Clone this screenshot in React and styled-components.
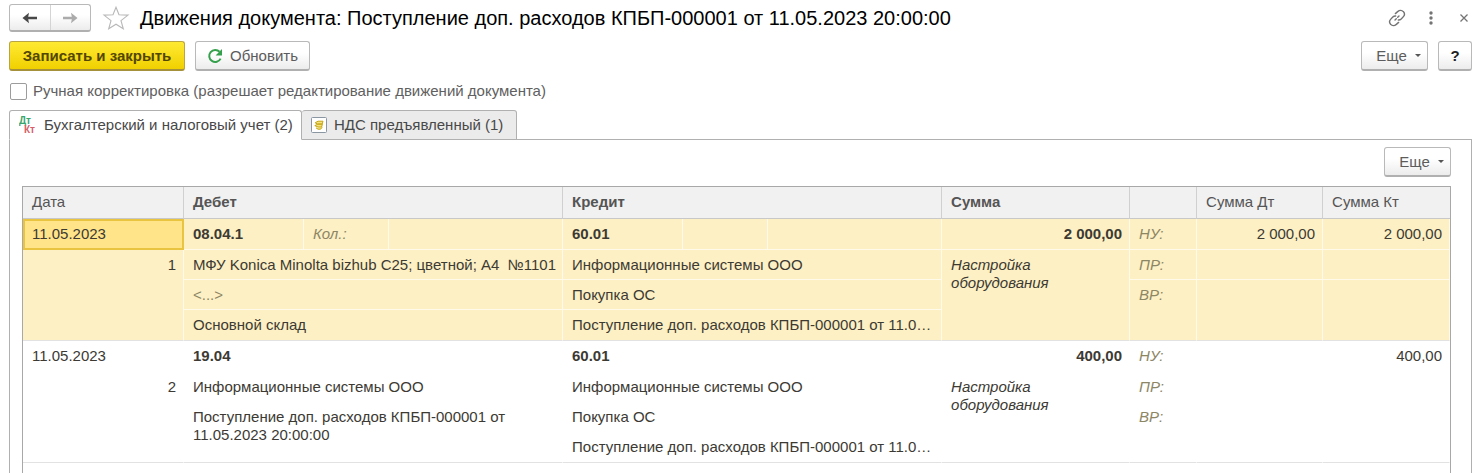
import React from "react";
import styled, { createGlobalStyle, css } from "styled-components";

const GlobalStyle = createGlobalStyle`
  * {
    box-sizing: border-box;
  }
  body {
    margin: 0;
    background: #fff;
    color: #404040;
    font-family: "Liberation Sans", Arial, sans-serif;
    font-size: 15px;
    line-height: 18px;
  }
`;

const Page = styled.div`
  display: flex;
  flex-direction: column;
  min-height: 100vh;
  padding: 4px 8px 0 9px;
`;

const Header = styled.header`
  display: flex;
  align-items: center;
  height: 28px;
`;

const raised = css`
  border: 1px solid #b9b9b9;
  border-bottom: 2px solid #b0b0b0;
  border-radius: 3px;
  background: linear-gradient(#fff 40%, #ececec);
`;

const NavGroup = styled.div`
  ${raised}
  display: flex;
  width: 82px;
  height: 28px;
`;

const NavButton = styled.button`
  display: flex;
  flex: 1;
  align-items: center;
  justify-content: center;
  padding: 0;
  border: 0;
  background: none;
  color: ${(props) => (props.$muted ? "#ababab" : "#484848")};
  cursor: pointer;

  & + & {
    border-left: 1px solid #d4d4d4;
  }
`;

const IconButton = styled.button`
  display: flex;
  align-items: center;
  justify-content: center;
  width: ${(props) => props.$width}px;
  height: 28px;
  padding: 0;
  border: 0;
  background: none;
  color: #747474;
  cursor: pointer;
`;

const StarButton = styled(IconButton)`
  margin: 0 10px 0 11px;
`;

const WindowActions = styled.div`
  display: flex;
  gap: 21px;
`;

const Title = styled.h1`
  flex: 1;
  margin: 0;
  color: #000;
  font-size: 20px;
  font-weight: 400;
  line-height: 26px;
  white-space: nowrap;
`;

const Toolbar = styled.div`
  display: flex;
  gap: 10px;
  margin-top: 9px;
`;

const Spacer = styled.div`
  flex: 1;
`;

const Button = styled.button`
  ${raised}
  display: flex;
  align-items: center;
  justify-content: center;
  gap: 7px;
  height: 30px;
  width: ${(props) => props.$width}px;
  padding: 0;
  color: #5c5c5c;
  font: inherit;
  cursor: pointer;
`;

const PrimaryButton = styled(Button)`
  border-color: #b9a544;
  border-bottom-color: #a5913a;
  background: linear-gradient(#ffea33, #f0d000);
  color: #534600;
  font-weight: 700;
`;

const MenuButton = styled(Button)`
  gap: 8px;
  padding-left: 8px;
`;

const HelpButton = styled(Button)`
  color: #222;
  font-weight: 700;
`;

const Caret = styled.span`
  border: 3px solid transparent;
  border-top-color: #555;
  border-bottom: 0;
`;

const CheckLabel = styled.label`
  display: flex;
  align-items: center;
  gap: 6px;
  height: 18px;
  margin: 11px 0 10px 1px;
  color: #606060;
`;

const Checkbox = styled.input`
  appearance: none;
  width: 17px;
  height: 17px;
  margin: 0;
  border: 1px solid #9c9c9c;
  border-radius: 2px;
  background: #fff;

  &:checked {
    background: #f2d516;
  }
`;

const Tabs = styled.div`
  display: flex;
`;

const Tab = styled.button`
  display: flex;
  align-items: center;
  gap: 7px;
  height: 30px;
  width: ${(props) => props.$width}px;
  padding: 0 0 0 9px;
  border: 1px solid #b0b0b0;
  border-bottom-color: ${(props) => (props.$active ? "#fff" : "#b0b0b0")};
  border-radius: 3px 3px 0 0;
  background: ${(props) => (props.$active ? "#fff" : "#ebebeb")};
  color: #484848;
  font: inherit;
  white-space: nowrap;
  cursor: pointer;

  & + & {
    border-left: 0;
  }
`;

const TabsLine = styled.div`
  flex: 1;
  border-bottom: 1px solid #b0b0b0;
`;

const Panel = styled.section`
  display: flex;
  flex: 1;
  flex-direction: column;
  padding: 7px 20px 0 12px;
  border: solid #b0b0b0;
  border-width: 0 1px;
`;

const PanelBar = styled.div`
  display: flex;
  justify-content: flex-end;
  margin-bottom: 9px;
`;

const TableFrame = styled.div`
  flex: 1;
  border: 1px solid #a8a8a8;
  border-bottom: 0;
`;

const Table = styled.table`
  width: 100%;
  table-layout: fixed;
  border-collapse: separate;
  border-spacing: 0;
`;

const Th = styled.th`
  height: 32px;
  padding: 0 9px 2px;
  border-right: 1px solid #d0d0d0;
  border-bottom: 1px solid #c8c8c8;
  background: #f1f1f1;
  color: #555;
  font-weight: ${(props) => (props.$bold ? 700 : 400)};
  text-align: left;

  &:last-child {
    border-right: 0;
  }
`;

const Row = styled.tr`
  height: ${(props) => props.$height || 30}px;
  background: ${(props) => (props.$selected ? "#fdf0c4" : "#fff")};
  --line: ${(props) => (props.$selected ? "#fffae9" : "#fff")};
`;

const Td = styled.td`
  padding: 6px ${(props) => (props.$right ? 7 : 4)}px 0 9px;
  border-right: 1px solid var(--line);
  border-bottom: 1px solid ${(props) => (props.$last ? "#e2e2e2" : "var(--line)")};
  font-weight: ${(props) => (props.$bold ? 700 : 400)};
  font-style: ${(props) => (props.$italic ? "italic" : "normal")};
  text-align: ${(props) => (props.$right ? "right" : "left")};
  vertical-align: top;
  color: ${(props) => (props.$muted ? "#8d8665" : "#3c3a33")};
`;

const ActiveTd = styled(Td)`
  padding: 4px 7px 0;
  border: 2px solid #e9c440;
  background: #ffe48a;
`;

const Line = styled.div`
  white-space: pre;
`;

const LinkIcon = () => (
  <svg width="18" height="18" viewBox="0 0 18 18" fill="none" stroke="currentColor" strokeWidth="1.4" strokeLinecap="round">
    <path d="M7.4 4.6 9.9 2.4a3.7 3.7 0 0 1 5.4.2 3.7 3.7 0 0 1 .1 5L13.2 10a3.7 3.7 0 0 1-2.9 1" />
    <path d="M10.6 13.4 8.1 15.6a3.7 3.7 0 0 1-5.4-.2 3.7 3.7 0 0 1-.1-5L4.8 8a3.7 3.7 0 0 1 2.9-1" />
    <path d="M7 11l1.3-1.3M9.7 8.3 11 7" />
  </svg>
);

const ArrowIcon = ({ flip }) => (
  <svg width="16" height="12" viewBox="0 0 16 12" fill="currentColor">
    <path d={flip ? "M15.5 6 9 .8l.8 3.9H1v2.6h8.8L9 11.2z" : "M.5 6 7 .8l-.8 3.9H15v2.6H6.2l.8 3.9z"} />
  </svg>
);

const StarIcon = () => (
  <svg width="28" height="26" viewBox="0 0 28 26" fill="none" stroke="#b8b8b8" strokeWidth="1.1">
    <path d="M14 2.2 17 9.8l9 .3-7 5.5 2.3 8.2-7.3-4.6-7.3 4.6L9 15.6 2 10.1l9-.3z" />
  </svg>
);

const RefreshIcon = () => (
  <svg width="16" height="16" viewBox="0 0 16 16">
    <path d="M12.6 3.8A6 6 0 1 0 13.6 10.6" fill="none" stroke="#35a04c" strokeWidth="2" />
    <path d="M15 1v6.6H8.6z" fill="#35a04c" />
  </svg>
);

const AccountIcon = () => (
  <svg width="18" height="18" viewBox="0 0 18 18" fontSize="10" fontWeight="700">
    <text x="0" y="8" fill="#38a56c">Дт</text>
    <text x="5" y="17" fill="#d5606a">Кт</text>
  </svg>
);

const VatIcon = () => (
  <svg width="16" height="16" viewBox="0 0 16 16" fill="none">
    <rect x=".5" y=".5" width="15" height="15" rx="1" fill="#fff" stroke="#8a97a3" />
    <path d="M4.2 5.8 7 4.2h5L11.2 7H6.4zM3.8 8.6l3-1.4h4.6L10.6 10H7zM5 10.8l2 1.4h2.6l1.6-2" fill="#f5e27c" stroke="#c4a512" />
  </svg>
);

const columns = [161, 120, 85, 174, 120, 85, 174, 188, 67, 126, 127];

const entries = [
  {
    number: 1,
    date: "11.05.2023",
    selected: true,
    debit: "08.04.1",
    quantity: "Кол.:",
    debitLines: ["МФУ Konica Minolta bizhub C25; цветной; А4  №1101", "<...>", "Основной склад"],
    sum: "2 000,00",
    sumDt: "2 000,00",
    sumKt: "2 000,00",
  },
  {
    number: 2,
    date: "11.05.2023",
    debit: "19.04",
    debitLines: ["Информационные системы ООО", "Поступление доп. расходов КПБП-000001 от 11.05.2023 20:00:00"],
    sum: "400,00",
    sumKt: "400,00",
  },
];

const Entry = ({ entry }) => {
  const { selected, debitLines } = entry;
  const DateCell = selected ? ActiveTd : Td;
  const wide = debitLines.length === 2;

  return (
    <tbody>
      <Row $selected={selected} $height={31}>
        <DateCell>{entry.date}</DateCell>
        <Td $bold>{entry.debit}</Td>
        <Td $italic $muted>{entry.quantity}</Td>
        <Td />
        <Td $bold>60.01</Td>
        <Td />
        <Td />
        <Td $bold $right>{entry.sum}</Td>
        <Td $italic $muted>НУ:</Td>
        <Td $right>{entry.sumDt}</Td>
        <Td $right>{entry.sumKt}</Td>
      </Row>
      <Row $selected={selected}>
        <Td $right rowSpan={3} $last>{entry.number}</Td>
        <Td colSpan={3}><Line>{debitLines[0]}</Line></Td>
        <Td colSpan={3}>Информационные системы ООО</Td>
        <Td $italic rowSpan={3} $last>Настройка оборудования</Td>
        <Td $italic $muted>ПР:</Td>
        <Td />
        <Td />
      </Row>
      <Row $selected={selected}>
        <Td colSpan={3} rowSpan={wide ? 2 : 1} $last={wide} $muted={!wide}>{debitLines[1]}</Td>
        <Td colSpan={3}>Покупка ОС</Td>
        <Td $italic $muted rowSpan={2} $last>ВР:</Td>
        <Td rowSpan={2} $last />
        <Td rowSpan={2} $last />
      </Row>
      <Row $selected={selected} $height={31}>
        {!wide && <Td colSpan={3} $last>{debitLines[2]}</Td>}
        <Td colSpan={3} $last>
          <Line>Поступление доп. расходов КПБП-000001 от 11.0…</Line>
        </Td>
      </Row>
    </tbody>
  );
};

const App = () => {
  return (
    <Page>
      <GlobalStyle />
      <Header>
        <NavGroup>
          <NavButton aria-label="Назад"><ArrowIcon /></NavButton>
          <NavButton $muted aria-label="Вперед"><ArrowIcon flip /></NavButton>
        </NavGroup>
        <StarButton $width={28} aria-label="В избранное"><StarIcon /></StarButton>
        <Title>Движения документа: Поступление доп. расходов КПБП-000001 от 11.05.2023 20:00:00</Title>
        <WindowActions>
          <IconButton $width={18} aria-label="Ссылка"><LinkIcon /></IconButton>
          <IconButton $width={8} aria-label="Меню">
            <svg width="4" height="14" viewBox="0 0 4 14" fill="currentColor">
              <circle cx="2" cy="2" r="1.7" />
              <circle cx="2" cy="7" r="1.7" />
              <circle cx="2" cy="12" r="1.7" />
            </svg>
          </IconButton>
          <IconButton $width={16} aria-label="Закрыть">
            <svg width="8" height="8" viewBox="0 0 8 8" stroke="currentColor" strokeWidth="1.3">
              <path d="M.5.5l7 7M7.5.5l-7 7" />
            </svg>
          </IconButton>
        </WindowActions>
      </Header>

      <Toolbar>
        <PrimaryButton $width={176}>Записать и закрыть</PrimaryButton>
        <Button $width={115}><RefreshIcon />Обновить</Button>
        <Spacer />
        <MenuButton $width={67}>Еще <Caret /></MenuButton>
        <HelpButton $width={34}>?</HelpButton>
      </Toolbar>

      <CheckLabel>
        <Checkbox type="checkbox" />
        Ручная корректировка (разрешает редактирование движений документа)
      </CheckLabel>

      <Tabs role="tablist">
        <Tab role="tab" aria-selected="true" $active $width={293}>
          <AccountIcon />
          Бухгалтерский и налоговый учет (2)
        </Tab>
        <Tab role="tab" aria-selected="false" $width={215}>
          <VatIcon />
          НДС предъявленный (1)
        </Tab>
        <TabsLine />
      </Tabs>

      <Panel>
        <PanelBar>
          <MenuButton $width={67}>Еще <Caret /></MenuButton>
        </PanelBar>
        <TableFrame>
          <Table>
            <colgroup>
              {columns.map((width, i) => (
                <col key={i} width={width} />
              ))}
            </colgroup>
            <thead>
              <tr>
                <Th>Дата</Th>
                <Th $bold colSpan={3}>Дебет</Th>
                <Th $bold colSpan={3}>Кредит</Th>
                <Th $bold>Сумма</Th>
                <Th />
                <Th>Сумма Дт</Th>
                <Th>Сумма Кт</Th>
              </tr>
            </thead>
            {entries.map((entry) => (
              <Entry key={entry.number} entry={entry} />
            ))}
          </Table>
        </TableFrame>
      </Panel>
    </Page>
  );
};

export default App;
